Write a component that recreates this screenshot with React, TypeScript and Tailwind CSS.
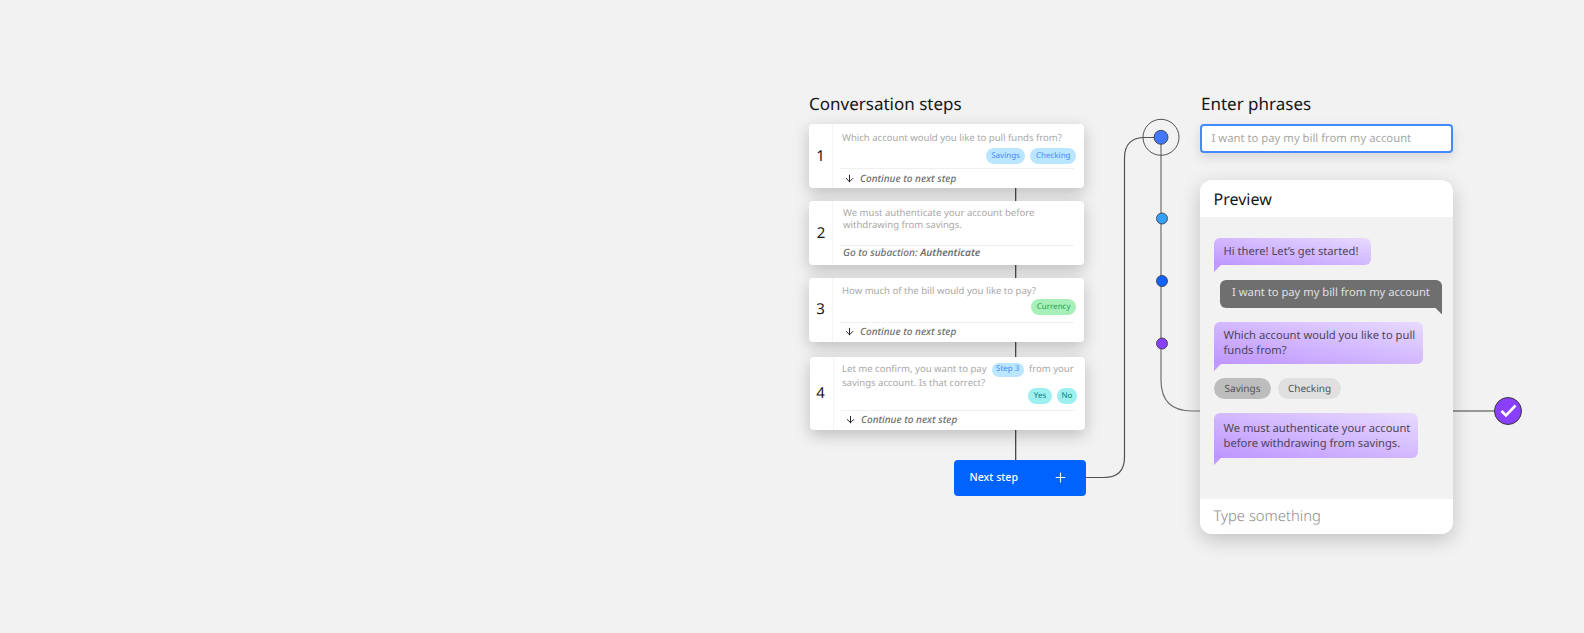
import React from 'react';
import { ArrowDown, Plus } from 'lucide-react';

const font = "font-['Noto_Sans',sans-serif] [text-rendering:geometricPrecision]";

const Chip = ({ label, tone, className = '' }: { label: string; tone: 'blue' | 'green' | 'teal'; className?: string }) => {
  const tones = {
    blue: 'bg-[#bae6ff] text-[#4589ff] px-[5.5px]',
    green: 'bg-[#a7f0ba] text-[#24a148] px-[5.5px]',
    teal: 'bg-[#9ef0f0] text-[#007d79] justify-center',
  };
  return (
    <span className={`flex h-4 items-center rounded-full text-[8px] leading-none ${tones[tone]} ${className}`}>
      {label}
    </span>
  );
};

const StepCard = ({
  num,
  height = 'h-[64px]',
  textClass = 'pt-[7px] pl-[2px]',
  chipClass = 'mt-[2px]',
  numClass = '',
  footer,
  children,
  chips,
}: {
  num: string;
  height?: string;
  textClass?: string;
  chipClass?: string;
  numClass?: string;
  footer: React.ReactNode;
  children: React.ReactNode;
  chips?: React.ReactNode;
}) => (
  <div className={`flex ${height} w-[275px] rounded-[4px] bg-white shadow-[0_5px_16px_rgba(0,0,0,0.22)]`}>
    <div className={`flex w-[24px] items-center justify-center border-r border-[#f4f4f4] text-[15px] text-[#161616] ${numClass}`}>
      {num}
    </div>
    <div className="flex min-w-0 flex-1 flex-col pl-[7px] pr-[10px]">
      <div className={`min-h-0 flex-1 whitespace-nowrap text-[9.55px] leading-[12.5px] text-[#a8a8a8] ${textClass}`}>
        {children}
        {chips && <div className={`-mr-[2px] flex justify-end gap-[5px] ${chipClass}`}>{chips}</div>}
      </div>
      <div className="flex h-[20px] shrink-0 items-center border-t border-[#f0f0f0] pb-[1px] text-[10px] font-medium italic text-[#6f6f6f]">
        {footer}
      </div>
    </div>
  </div>
);

const Continue = () => (
  <>
    <ArrowDown size={11} strokeWidth={2} className="ml-[4px] mr-[5px] text-[#161616]" />
    Continue to next step
  </>
);

const Bubble = ({ width, height, className, children }: { width: string; height: string; className: string; children: React.ReactNode }) => (
  <div
    className={`relative ${width} ${height} flex items-center whitespace-nowrap rounded-[6px] rounded-bl-none bg-linear-to-tr from-[#be95ff] to-[#e8daff] pl-[9.5px] text-[11.2px] leading-[15px] text-[#4d4458] ${className}`}
  >
    <span>{children}</span>
    <div className="absolute left-0 top-full h-[7px] w-[7px] bg-[#c29cff] [clip-path:polygon(0_0,100%_0,0_100%)]" />
  </div>
);

export default function App() {
  return (
    <div className={`relative h-[633px] w-full overflow-hidden bg-[#f2f2f2] ${font}`}>
      {/* connector lines sit behind the cards */}
      <svg className="absolute inset-0" width="1584" height="633" fill="none">
        <path d="M1015.7 188V460" stroke="#393939" strokeWidth="1.2" />
        <path
          d="M1086 477.5H1104Q1124.5 477.5 1124.5 457V158Q1124.5 137.5 1145 137.5H1161"
          stroke="#525252"
          strokeWidth="1.2"
        />
        <path d="M1161 137V380Q1161 411 1192 411H1201" stroke="#6f6f6f" strokeWidth="1.2" />
        <path d="M1453 411H1495" stroke="#7a7a7a" strokeWidth="1.4" />
      </svg>

      <div className="relative flex gap-[114px] pl-[809px] pt-[94px]">
        {/* left column */}
        <div className="flex w-[277px] flex-col">
          <h2 className="mb-[10px] h-[20px] text-[17px] leading-[20px] text-[#161616]">Conversation steps</h2>
          <StepCard
            num="1"
            textClass="pt-[7.5px] pl-[2px]"
            chipClass="mt-[3.5px]"
            footer={<Continue />}
            chips={
              <>
                <Chip label="Savings" tone="blue" />
                <Chip label="Checking" tone="blue" />
              </>
            }
          >
            Which account would you like to pull funds from?
          </StepCard>
          <div className="mt-[13px]">
            <StepCard
              num="2"
              textClass="pt-[5.5px] pl-[3px]"
              numClass="pl-[1px]"
              footer={<span className="mb-[4px] pl-[3px] text-[10.1px]">Go to subaction: <b className="font-semibold">Authenticate</b></span>}
            >
              We must authenticate your account before
              <br />
              withdrawing from savings.
            </StepCard>
          </div>
          <div className="mt-[12.5px]">
            <StepCard num="3" footer={<Continue />} chips={<Chip label="Currency" tone="green" />}>
              How much of the bill would you like to pay?
            </StepCard>
          </div>
          <div className="ml-px mt-[15px]">
            <StepCard
              num="4"
              height="h-[73px]"
              textClass="pt-[6px] pl-[1px]"
              chipClass="-mt-[1.5px]"
              numClass="pr-[2px]"
              footer={<Continue />}
              chips={
                <>
                  <Chip label="Yes" tone="teal" className="w-[24px]" />
                  <Chip label="No" tone="teal" className="w-[20px]" />
                </>
              }
            >
              <div className="flex items-center">
                Let me confirm, you want to pay
                <span className="mx-[5px] flex h-[14px] items-center rounded-full bg-[#bae6ff] px-[4.5px] text-[8px] text-[#4589ff]">
                  Step 3
                </span>
                from your
              </div>
              savings account. Is that correct?
            </StepCard>
          </div>
          <button className="ml-[145px] mt-[30px] flex h-[36px] w-[132px] items-center justify-between rounded-[4px] bg-[#0062ff] pl-[15.5px] pr-[18px] text-[10.6px] font-medium text-white">
            Next step
            <Plus size={15} strokeWidth={1.8} />
          </button>
        </div>

        {/* right column */}
        <div className="flex w-[253px] flex-col">
          <h2 className="mb-[10px] h-[20px] pl-[1px] text-[17px] leading-[20px] text-[#161616]">Enter phrases</h2>
          <div className="flex h-[29px] items-center whitespace-nowrap rounded-[4px] border-2 border-[#4589ff] bg-white pl-[9.5px] pt-[1px] text-[11.3px] text-[#a8a8a8] shadow-[0_4px_12px_rgba(0,0,0,0.12)]">
            I want to pay my bill from my account
          </div>

          <div className="mt-[27px] flex h-[354px] flex-col overflow-hidden rounded-[12px] bg-[#f2f2f2] shadow-[0_6px_20px_rgba(0,0,0,0.2)]">
            <div className="flex h-[37px] items-center bg-white pl-[13.5px] text-[16px] text-[#161616]">Preview</div>
            <div className="flex flex-1 flex-col items-start px-[14px] pt-[21px]">
              <Bubble width="w-[157px]" height="h-[27px]" className="">
                Hi there! Let’s get started!
              </Bubble>
              <div className="relative ml-[6px] mt-[14.5px] flex h-[28px] w-[222px] items-center justify-center whitespace-nowrap rounded-[6px] rounded-br-none bg-[#6f6f6f] text-[11.2px] text-[#e0e0e0]">
                I want to pay my bill from my account
                <div className="absolute right-0 top-full h-[7px] w-[7px] bg-[#6f6f6f] [clip-path:polygon(0_0,100%_0,100%_100%)]" />
              </div>
              <Bubble width="w-[209px]" height="h-[42px]" className="mt-[14.5px]">
                Which account would you like to pull
                <br />
                funds from?
              </Bubble>
              <div className="mt-[14px] flex gap-[7px] text-[10px] text-[#525252]">
                <span className="flex h-[21px] w-[57px] items-center justify-center rounded-full bg-[#bdbdbd]">Savings</span>
                <span className="flex h-[21px] w-[63px] items-center justify-center rounded-full bg-[#e0e0e0]">Checking</span>
              </div>
              <Bubble width="w-[204px]" height="h-[45px]" className="mt-[14px]">
                We must authenticate your account
                <br />
                before withdrawing from savings.
              </Bubble>
            </div>
            <div className="flex h-[35px] items-center bg-white pb-[1px] pl-[13.5px] text-[14.8px] font-light text-[#8d8d8d]">
              Type something
            </div>
          </div>
        </div>
      </div>

      {/* nodes on the connector */}
      <svg className="absolute inset-0" width="1584" height="633" fill="none">
        <circle cx="1161" cy="137.3" r="18" stroke="#525252" strokeWidth="1" />
        <circle cx="1161" cy="137.3" r="7" fill="#4178ff" stroke="#393939" strokeWidth="0.8" />
        <circle cx="1162" cy="218.5" r="5.5" fill="#33a1fd" stroke="#393939" strokeWidth="0.8" />
        <circle cx="1162" cy="281" r="5.5" fill="#0f62fe" stroke="#393939" strokeWidth="0.8" />
        <circle cx="1162" cy="343.5" r="5.5" fill="#8a3ffc" stroke="#393939" strokeWidth="0.8" />
        <circle cx="1508" cy="411" r="13.5" fill="#8a3ffc" stroke="#393939" strokeWidth="1" />
        <path d="M1501.5 411L1506 415.5L1515.5 405.5" stroke="#fff" strokeWidth="2.6" />
      </svg>
    </div>
  );
}
